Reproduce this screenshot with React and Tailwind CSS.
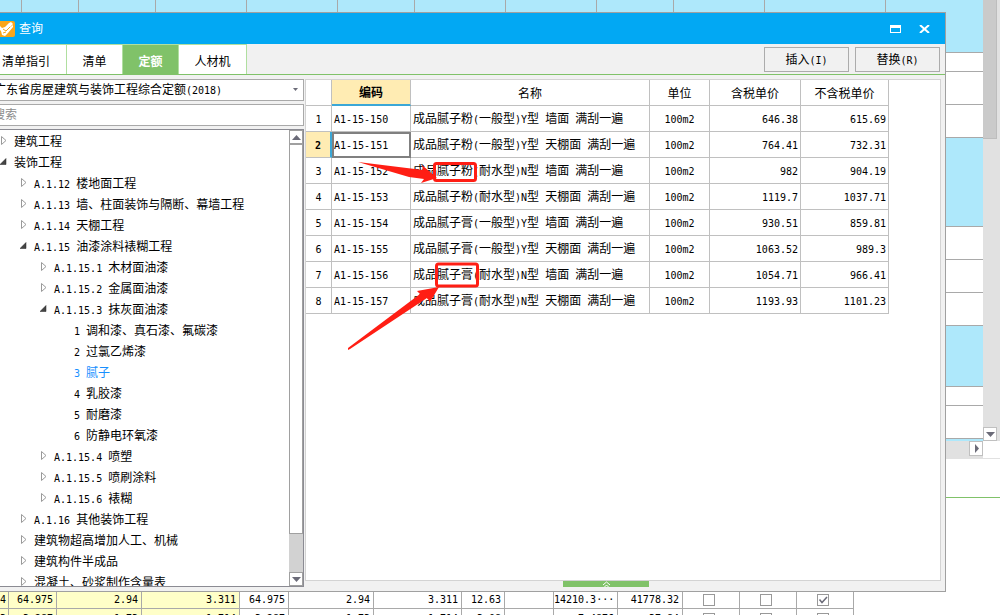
import { Fragment, useState } from 'react';

const treeRows = [
  { level: 0, label: '建筑工程', state: 'closed' },
  { level: 0, label: '装饰工程', state: 'open' },
  { level: 1, label: 'A.1.12 楼地面工程', state: 'closed' },
  { level: 1, label: 'A.1.13 墙、柱面装饰与隔断、幕墙工程', state: 'closed' },
  { level: 1, label: 'A.1.14 天棚工程', state: 'closed' },
  { level: 1, label: 'A.1.15 油漆涂料裱糊工程', state: 'open' },
  { level: 2, label: 'A.1.15.1 木材面油漆', state: 'closed' },
  { level: 2, label: 'A.1.15.2 金属面油漆', state: 'closed' },
  { level: 2, label: 'A.1.15.3 抹灰面油漆', state: 'open' },
  { level: 3, label: '1 调和漆、真石漆、氟碳漆' },
  { level: 3, label: '2 过氯乙烯漆' },
  { level: 3, label: '3 腻子' },
  { level: 3, label: '4 乳胶漆' },
  { level: 3, label: '5 耐磨漆' },
  { level: 3, label: '6 防静电环氧漆' },
  { level: 2, label: 'A.1.15.4 喷塑', state: 'closed' },
  { level: 2, label: 'A.1.15.5 喷刷涂料', state: 'closed' },
  { level: 2, label: 'A.1.15.6 裱糊', state: 'closed' },
  { level: 1, label: 'A.1.16 其他装饰工程', state: 'closed' },
  { level: 1, label: '建筑物超高增加人工、机械', state: 'closed' },
  { level: 1, label: '建筑构件半成品', state: 'closed' },
  { level: 1, label: '混凝土、砂浆制作含量表', state: 'closed' },
];

const indents = ['', 'pl-5', 'pl-10', 'pl-[60px]'];

const quotas = [
  ['A1-15-150', '成品腻子粉(一般型)Y型 墙面 满刮一遍', '100m2', '646.38', '615.69'],
  ['A1-15-151', '成品腻子粉(一般型)Y型 天棚面 满刮一遍', '100m2', '764.41', '732.31'],
  ['A1-15-152', '成品腻子粉(耐水型)N型 墙面 满刮一遍', '100m2', '982', '904.19'],
  ['A1-15-153', '成品腻子粉(耐水型)N型 天棚面 满刮一遍', '100m2', '1119.7', '1037.71'],
  ['A1-15-154', '成品腻子膏(一般型)Y型 墙面 满刮一遍', '100m2', '930.51', '859.81'],
  ['A1-15-155', '成品腻子膏(一般型)Y型 天棚面 满刮一遍', '100m2', '1063.52', '989.3'],
  ['A1-15-156', '成品腻子膏(耐水型)N型 墙面 满刮一遍', '100m2', '1054.71', '966.41'],
  ['A1-15-157', '成品腻子膏(耐水型)N型 天棚面 满刮一遍', '100m2', '1193.93', '1101.23'],
];

const sheetRows = [
  'h-[53px] bg-[#aee8fb]',
  'h-[19px] bg-white',
  'h-[33px] bg-white',
  'h-[33px] bg-white',
  'h-[89px] bg-[#aee8fb]',
  'h-[33px] bg-white',
  'h-[33px] bg-white',
  'h-[33px] bg-white',
  'h-[61px] bg-[#aee8fb]',
  'h-[19px] bg-white',
  'h-[33px] bg-white',
];

const sheetCols = ['w-[22px]', 'w-[57px]', 'w-[77px]', 'w-[91px]', 'w-[91px]', 'w-[77px]', 'w-[91px]', 'w-[91px]', 'w-[77px]', 'w-[91px]', 'w-[121px]'];

const totals = [
  ['4', '64.975', '2.94', '3.311', '64.975', '2.94', '3.311', '12.63', '', '14210.3···', '41778.32'],
  ['3', '3.287', '1.73', '1.714', '3.287', '1.73', '1.714', '3.08', '', '7.4876', '37.84'],
];

const totalCols = ['w-[9px]', 'w-[48px]', 'w-[85px]', 'w-[98px]', 'w-[49px]', 'w-[85px]', 'w-[88px]', 'w-[43px]', 'w-[49px]', 'w-[64px]', 'w-[65px]', 'w-[57px]', 'w-[57px]', 'w-[57px]'];

// Half-width characters take half the width of a Chinese one
function Text({ children }) {
  return children.split(/([\x20-\x7e·]+)/).map((part, i) =>
    i % 2 ? (
      <span key={i} className="whitespace-pre font-['DejaVu_Sans_Mono',monospace] text-[10px]">{part}</span>
    ) : (
      <Fragment key={i}>{part}</Fragment>
    )
  );
}

function TreeArrow({ state }) {
  if (!state) return <span className="w-[14px] shrink-0" />;
  return (
    <svg className="w-[14px] h-3 shrink-0" viewBox="0 0 14 12">
      {state === 'open' ? (
        <path d="M6 2.500v6H0z" fill="#444" stroke="#222" strokeWidth="0.5" />
      ) : (
        <path d="M1.500 1.500v8L6 5.500z" fill="#fff" stroke="#9a9a9a" />
      )}
    </svg>
  );
}

function ScrollButton({ d, label, className }) {
  return (
    <button type="button" aria-label={label} className={`flex items-center justify-center bg-white border ${className}`}>
      <svg width="9" height="9" viewBox="0 0 9 9">
        <path d={d} fill="#6b6b78" />
      </svg>
    </button>
  );
}

const UP = 'M0 7L4.500 2 9 7z';
const DOWN = 'M0 2L4.500 7 9 2z';
const RIGHT = 'M3 0L7 4.500 3 9z';

function Workbook() {
  return (
    <div className="h-full flex flex-col bg-white">
      <div className="flex">
        <div className="flex-1 h-[441px] overflow-hidden bg-[#aee8fb]">
          {sheetRows.map((row, i) => (
            <div key={i} className={`border-b border-[#a9a9a9] ${row}`}>
              {i === 0 && (
                <div className="flex h-full">
                  {sheetCols.map((col, j) => (
                    <div key={j} className={`shrink-0 border-r border-[#a9a9a9] ${col}`} />
                  ))}
                </div>
              )}
            </div>
          ))}
        </div>
        <div className="w-[17px] flex flex-col justify-between bg-[#e1e1e1]">
          <div className="h-[139px] w-[14px] bg-[#cacaca] border-b border-r border-[#bdbdbd]" />
          <ScrollButton label="向下滚动" d={DOWN} className="w-[14px] h-[14px] border-[#c0c0c0]" />
        </div>
      </div>
      <div className="h-[18px] flex border-b border-[#e1e1e1]">
        <div className="flex-1 flex justify-end bg-[#e1e1e1]">
          <ScrollButton label="向右滚动" d={RIGHT} className="w-[14px] h-[15px] border-[#c0c0c0]" />
        </div>
        <div className="w-[17px]" />
      </div>
      <div className="h-[39px] border-b border-[#80c269]" />
      <div className="flex-1 pt-[93px] overflow-hidden">
        <table className="table-fixed w-[854px] border-separate border-spacing-0 text-right leading-4">
          <colgroup>
            {totalCols.map((col, i) => <col key={i} className={col} />)}
          </colgroup>
          <tbody>
            {totals.map((row, i) => (
              <tr key={i} className={i === 0 ? 'h-4' : 'h-5'}>
                {row.map((value, j) => (
                  <td key={j} className={`p-0 pr-[3px] whitespace-nowrap overflow-hidden border-r border-b border-[#a9a9a9] ${j < 4 ? 'bg-[#ffffc8]' : ''}`}>
                    <Text>{value}</Text>
                  </td>
                ))}
                {[false, false, true].map((checked, j) => (
                  <td key={j} className="p-0 pr-1 border-r border-b border-[#a9a9a9]">
                    <label className="relative flex justify-center">
                      <input type="checkbox" aria-label="选项" defaultChecked={checked} className="peer appearance-none w-3 h-3 border border-[#999] bg-white" />
                      <svg className="hidden peer-checked:block absolute w-3 h-3" viewBox="0 0 12 12" fill="none" stroke="#6b6b78" strokeWidth="1.500">
                        <path d="M2.500 5.500L5 8.500l5-5.500" />
                      </svg>
                    </label>
                  </td>
                ))}
              </tr>
            ))}
          </tbody>
        </table>
      </div>
    </div>
  );
}

function TitleBar() {
  return (
    <header className="h-[31px] flex items-center bg-[#02a8f3] text-white">
      <svg className="w-[15px] h-4" viewBox="0 0 15 16">
        <rect x="-2" width="17" height="16" rx="2" fill="#faa61a" />
        <path d="M0 5l2 2 3-1 4-4 2-1 2 2-5 5 5-4v2L8 12l-3 3-3-1-1-4-1-1z" fill="#fff" />
        <path d="M3 8l3 2 4-4M3 12l3-1" stroke="#faa61a" fill="none" />
      </svg>
      <h1 className="ml-1 flex-1">查询</h1>
      <button type="button" aria-label="最大化" className="mr-[18px]">
        <svg width="11" height="8" viewBox="0 0 11 8">
          <path d="M0 0h11v8H0zM1 3v4h9V3z" fill="#fff" fillRule="evenodd" />
        </svg>
      </button>
      <button type="button" aria-label="关闭" className="mr-[15px]">
        <svg width="11" height="8" viewBox="0 0 11 8">
          <path d="M1 0l9 8M10 0L1 8" stroke="#fff" strokeWidth="2" />
        </svg>
      </button>
    </header>
  );
}

function Toolbar() {
  const [tab, setTab] = useState('定额');
  const tabs = [
    ['清单指引', 'w-[67px] pr-[14px]'],
    ['清单', 'w-14'],
    ['定额', 'w-14'],
    ['人材机', 'w-[68px]'],
  ];

  return (
    <div className="h-[31px] flex justify-between border-b border-[#80c269]">
      <nav className="flex">
        {tabs.map(([name, width]) => (
          <button
            key={name}
            type="button"
            onClick={() => setTab(name)}
            className={`border-t border-r border-[#b0dfa0] pt-1 ${width} ${tab === name ? 'bg-[#80c269] text-white font-bold' : 'bg-white'}`}
          >
            {name}
          </button>
        ))}
      </nav>
      <div className="flex gap-[6px] pt-[3px] pr-[5px]">
        <button type="button" className="w-[85px] h-[25px] border border-[#acacac]"><Text>插入(I)</Text></button>
        <button type="button" className="w-[85px] h-[25px] border border-[#acacac]"><Text>替换(R)</Text></button>
      </div>
    </div>
  );
}

function Sidebar() {
  const [selected, setSelected] = useState('3 腻子');

  return (
    <aside className="w-[304px] shrink-0 flex flex-col gap-[3px] pt-1 pb-1">
      <button type="button" aria-haspopup="listbox" className="h-[22px] shrink-0 flex items-center justify-between bg-white border border-l-0 border-[#a9a9a9] pr-1 overflow-hidden whitespace-nowrap">
        <span className="-ml-[6px]"><Text>广东省房屋建筑与装饰工程综合定额(2018)</Text></span>
        <svg width="7" height="4" viewBox="0 0 7 4"><path d="M1 0h5L3.500 3z" fill="#6b6b78" /></svg>
      </button>
      <input aria-label="搜索" placeholder="搜索" className="h-[22px] shrink-0 -indent-[7px] bg-white border border-l-0 border-[#a9a9a9] placeholder:text-[#8c8c8c] outline-none" />
      <div className="flex-1 min-h-0 flex bg-white border border-l-0 border-[#8b8b93]">
        <ul className="flex-1 overflow-hidden">
          {treeRows.map(row => (
            <li key={row.label} className={indents[row.level]}>
              <button
                type="button"
                onClick={() => setSelected(row.label)}
                className={`h-[21px] flex items-center whitespace-nowrap ${selected === row.label ? 'text-[#1890ff]' : ''}`}
              >
                <TreeArrow state={row.state} />
                <span className="pt-[2px]"><Text>{row.label}</Text></span>
              </button>
            </li>
          ))}
        </ul>
        <div className="w-[14px] flex flex-col bg-[#d2d2d2]">
          <ScrollButton label="向上滚动" d={UP} className="h-[14px] border-[#a0a0a0]" />
          <div className="flex-1 bg-white border border-[#a0a0a0]" />
          <ScrollButton label="向下滚动" d={DOWN} className="mt-[38px] h-[14px] border-[#a0a0a0]" />
        </div>
      </div>
    </aside>
  );
}

function QuotaTable() {
  const [current, setCurrent] = useState(1);
  const cell = 'p-0 pt-[2px] border-r border-b border-[#c0c0c0] whitespace-nowrap';

  return (
    <table className="table-fixed w-[583px] border-separate border-spacing-0 leading-4">
      <colgroup>
        <col className="w-[26px]" />
        <col className="w-[79px]" />
        <col className="w-[239px]" />
        <col className="w-[60px]" />
        <col className="w-[91px]" />
        <col className="w-[88px]" />
      </colgroup>
      <thead>
        <tr className="h-[26px]">
          <th className={cell} aria-label="序号" />
          <th className="p-0 pt-[2px] border-b-2 border-r border-b-[#3ba7d6] border-r-[#c0c0c0] bg-[#ffecb3]">编码</th>
          {['名称', '单位', '含税单价', '不含税单价'].map(name => (
            <th key={name} className={`font-normal ${cell}`}>{name}</th>
          ))}
        </tr>
      </thead>
      <tbody>
        {quotas.map(([code, name, unit, taxed, untaxed], i) => (
          <tr key={code} className="h-[26px]" onClick={() => setCurrent(i)}>
            <th className={`${cell} ${current === i ? 'bg-[#ffecb3] border-r-2 border-r-[#3ba7d6]' : 'font-normal'}`}>
              <Text>{String(i + 1)}</Text>
            </th>
            <td className={`pl-[2px] ${cell} ${current === i ? 'outline-2 -outline-offset-2 outline-[#808080]' : ''}`}><Text>{code}</Text></td>
            <td className={`pl-[2px] ${cell}`}><Text>{name}</Text></td>
            <td className={`text-center ${cell}`}><Text>{unit}</Text></td>
            <td className={`text-right pr-[2px] ${cell}`}><Text>{taxed}</Text></td>
            <td className={`text-right pr-[2px] ${cell}`}><Text>{untaxed}</Text></td>
          </tr>
        ))}
      </tbody>
    </table>
  );
}

// Red boxes and arrows drawn over the grid
function Marks() {
  return (
    <svg className="absolute left-0 top-0 pointer-events-none" width="200" height="300" viewBox="307 80 200 300" fill="none">
      <g stroke="#ff1e14" strokeWidth="3">
        <rect x="435.500" y="163.500" width="41" height="17" rx="2" />
        <rect x="437.500" y="264" width="41" height="22" rx="2" />
      </g>
      <g fill="#ff1e14">
        <path d="M359 162l65 8-1-5 15 13-16 5 3-4-15-2z" />
        <path d="M349 348l72-54-3-3 22-4-9 15-3-4-77 51-2 1z" />
      </g>
    </svg>
  );
}

function QueryDialog() {
  return (
    <section className="absolute left-0 right-[54px] top-3 bottom-[23px] flex flex-col bg-[#f1f1f1] border border-l-0 border-[#a0a0a0]">
      <TitleBar />
      <Toolbar />
      <div className="flex-1 min-h-0 flex">
        <Sidebar />
        <div className="flex-1 min-w-0 ml-[1px] mr-1 pt-1 flex flex-col">
          <div className="relative flex-1 min-h-0 bg-white border border-[#d3d3d3]">
            <QuotaTable />
            <Marks />
          </div>
          <button type="button" aria-label="展开" className="h-[6px] w-[86px] mb-[4px] ml-[258px] flex justify-center bg-[#80c269]">
            <svg width="9" height="6" viewBox="0 0 9 6" fill="none" stroke="#fff">
              <path d="M1 4l3.500-3L8 4M2.500 6l2-2 2 2" />
            </svg>
          </button>
        </div>
      </div>
    </section>
  );
}

export default function App() {
  return (
    <main className="relative h-screen overflow-hidden text-xs text-black font-['Liberation_Sans','Noto_Sans_CJK_SC',sans-serif]">
      <Workbook />
      <QueryDialog />
    </main>
  );
}
